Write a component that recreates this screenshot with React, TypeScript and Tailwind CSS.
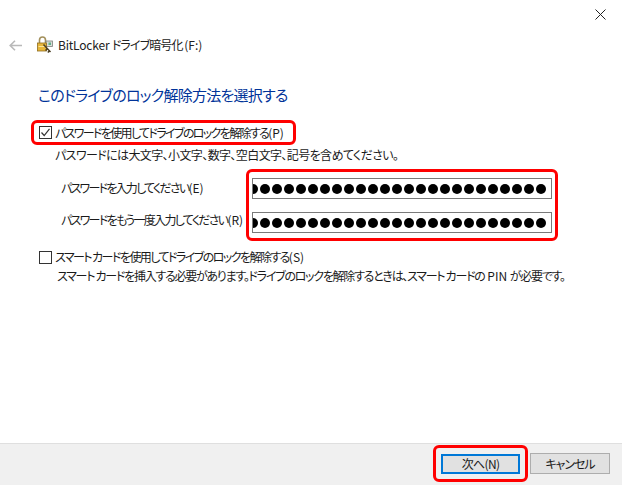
import React from "react";

const F = "[font-family:'Noto_Sans_CJK_JP','Noto_Sans',sans-serif] [font-feature-settings:'palt']";

function Check({ checked }: { checked?: boolean }) {
  return (
    <div className="w-[13px] h-[13px] border border-[#333333] bg-white shrink-0 flex items-center justify-center">
      {checked && (
        <svg width="11" height="11" viewBox="0 0 11 11" fill="none">
          <path d="M1.5 5.5 L4.2 8.5 L9.5 1.8" stroke="#333333" strokeWidth="1.2" />
        </svg>
      )}
    </div>
  );
}

function Dots() {
  return (
    <div className="w-[300px] h-[21px] border border-[#7a7a7a] bg-white overflow-hidden flex items-center pl-[1px]">
      <span className="flex items-center gap-[2px] ml-[-6px]">
        {Array.from({ length: 25 }).map((_, i) => (
          <span key={i} className="w-[10px] h-[10px] rounded-full bg-black shrink-0" />
        ))}
      </span>
    </div>
  );
}

function BitLockerIcon() {
  return (
    <svg width="16" height="18" viewBox="0 0 16 18" className="shrink-0">
      <path d="M2.5 7 V4 a3 3 0 0 1 6 0 V7" fill="none" stroke="#a3905c" strokeWidth="1.6" />
      <rect x="9" y="5" width="6.5" height="5.5" fill="#d9dcd8" stroke="#7b7f7b" strokeWidth="0.8" />
      <rect x="11.5" y="6.5" width="2.5" height="2.5" fill="#5fb08a" />
      <rect x="0.5" y="7" width="9" height="8" fill="#e6b63a" stroke="#8f6d1e" strokeWidth="0.8" />
      <rect x="1.5" y="10" width="7" height="1" fill="#fbe59a" />
      <path d="M6.5 8.5 L13.5 16 M10.5 12.5 L8.5 14.5 M12.5 14.8 L10.8 16.5" stroke="#4a3f24" strokeWidth="1.5" fill="none" />
    </svg>
  );
}

export default function App() {
  return (
    <div className={`w-[622px] h-[485px] bg-white flex flex-col overflow-hidden text-[#1a1a1a] text-[12px] leading-[16px] ${F}`}>
      <div className="flex justify-end h-[28px] pt-[9px] pr-[16px]">
        <svg width="11" height="11" viewBox="0 0 11 11">
          <path d="M0.5 0.5 L10.5 10.5 M10.5 0.5 L0.5 10.5" stroke="#222222" strokeWidth="1" fill="none" />
        </svg>
      </div>
      <div className="flex items-center h-[34px] pl-[9px]">
        <svg width="13" height="11" viewBox="0 0 13 11" fill="none" className="shrink-0">
          <path d="M6 0.8 L1.2 5.5 L6 10.2 M1.2 5.5 H13" stroke="#b9b9b9" strokeWidth="1.6" />
        </svg>
        <div className="ml-[15px]"><BitLockerIcon /></div>
        <span className="ml-[5px] text-[12px] text-[#222222] whitespace-nowrap">
          <span className="tracking-[-0.2px]">BitLocker </span>
          <span className="tracking-[-0.9px]">ドライブ暗号化 </span>
          <span className="tracking-[0px]">(F:)</span>
        </span>
      </div>
      <div className="mt-[23px] pl-[38px] text-[15px] leading-[20px] tracking-[-0.75px] text-[#003399] whitespace-nowrap">
        このドライブのロック解除方法を選択する
      </div>
      <div className="mt-[15px] ml-[31px] w-[265px] h-[25px] border-[3px] border-[#ff0000] rounded-[6px] flex items-center pl-[5px] gap-[3px]">
        <Check checked />
        <span className="whitespace-nowrap tracking-[-1.65px]">パスワードを使用してドライブのロックを解除する<span className="tracking-[0px]">(P)</span></span>
      </div>
      <div className="mt-[2px] ml-[55px] whitespace-nowrap tracking-[-0.6px]">
        パスワードには大文字、小文字、数字、空白文字、記号を含めてください。
      </div>
      <div className="mt-[6px] ml-[61px] flex items-center">
        <div className="w-[185px] pb-[2px] flex flex-col gap-[16px]">
          <span className="whitespace-nowrap tracking-[-1.76px]">パスワードを入力してください<span className="tracking-[0px]">(E)</span></span>
          <span className="whitespace-nowrap tracking-[-1.7px]">パスワードをもう一度入力してください<span className="tracking-[0px]">(R)</span></span>
        </div>
        <div className="w-[312px] h-[72px] border-[3px] border-[#ff0000] rounded-[6px] flex flex-col items-center pt-[6px] gap-[13px]">
          <Dots />
          <Dots />
        </div>
      </div>
      <div className="mt-[8px] ml-[39px] flex items-center gap-[3px] h-[16px]">
        <Check />
        <span className="whitespace-nowrap tracking-[-1.56px]">スマート カードを使用してドライブのロックを解除する<span className="tracking-[0px]">(S)</span></span>
      </div>
      <div className="mt-[3px] ml-[57px] whitespace-nowrap tracking-[-1.27px]">
        スマート カードを挿入する必要があります。ドライブのロックを解除するときは、スマート カードの<span className="tracking-[0px]"> PIN </span>が必要です。
      </div>
      <div className="mt-auto h-[42px] bg-[#f0f0f0] border-t border-[#dfdfdf] flex items-start justify-end pr-[12px] pt-[1px]">
        <div className="w-[95px] h-[37px] border-[3px] border-[#ff0000] rounded-[6px] pl-[5px] pt-[6px]">
          <div className="w-[79px] h-[20px] border-2 border-[#0078d7] bg-[#e1e1e1] flex items-center justify-center whitespace-nowrap tracking-[-0.7px]">次へ(N)</div>
        </div>
        <div className="ml-[2px] mt-[8px] w-[80px] h-[21px] border border-[#adadad] bg-[#e1e1e1] flex items-center justify-center whitespace-nowrap tracking-[-1px]">キャンセル</div>
      </div>
    </div>
  );
}
